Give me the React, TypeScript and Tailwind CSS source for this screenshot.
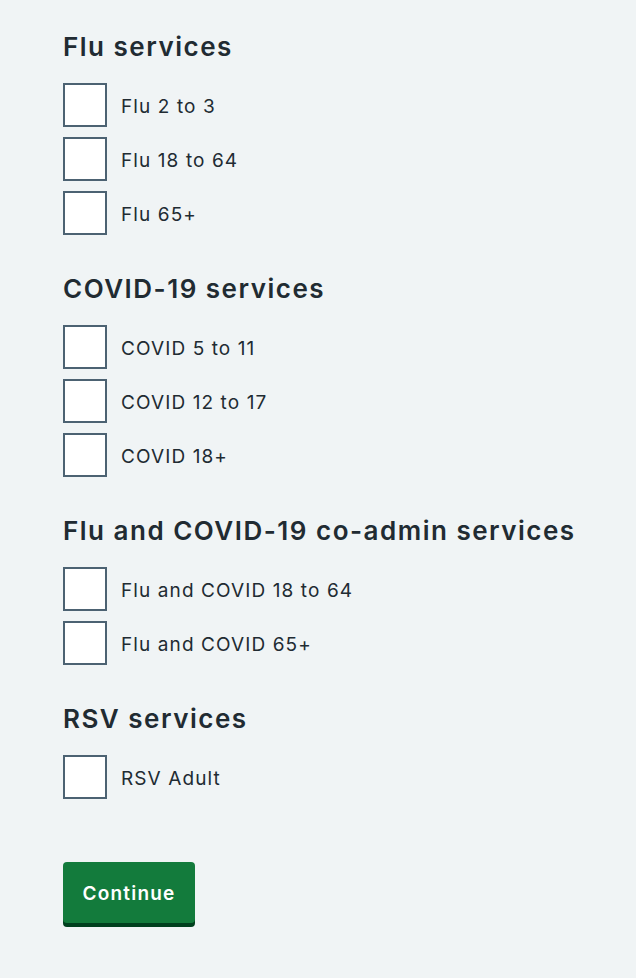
import React from "react";

const sections = [
  { title: "Flu services", items: ["Flu 2 to 3", "Flu 18 to 64", "Flu 65+"] },
  { title: "COVID-19 services", items: ["COVID 5 to 11", "COVID 12 to 17", "COVID 18+"] },
  {
    title: "Flu and COVID-19 co-admin services",
    items: ["Flu and COVID 18 to 64", "Flu and COVID 65+"],
  },
  { title: "RSV services", items: ["RSV Adult"] },
];

export default function App() {
  return (
    <div
      className="min-h-[978px] bg-[#f0f4f5] pl-[63px] pr-[32px] pt-[31px] text-[#212b32]"
      style={{ fontFamily: "Inter, 'Noto Sans', sans-serif" }}
    >
      <form className="flex flex-col gap-[38px]">
        {sections.map((section) => (
          <fieldset key={section.title} className="flex flex-col">
            <legend className="mb-[20px] whitespace-nowrap text-[26px] font-semibold leading-[32px] tracking-[1.5px]">
              {section.title}
            </legend>
            <div className="flex flex-col gap-[10px]">
              {section.items.map((item) => (
                <label key={item} className="flex items-center gap-[14px] cursor-pointer">
                  <input
                    type="checkbox"
                    className="h-[44px] w-[44px] shrink-0 appearance-none border-2 border-[#4c6272] bg-white"
                  />
                  <span className="pt-[4px] text-[19px] leading-[28px] tracking-[1.1px]">{item}</span>
                </label>
              ))}
            </div>
          </fieldset>
        ))}
      </form>
      <button
        type="button"
        className="mt-[63px] h-[61px] w-[132px] rounded-[4px] bg-[#137b3c] pt-[3px] text-[19px] font-semibold tracking-[1.2px] text-white shadow-[0_4px_0_#00401e]"
      >
        Continue
      </button>
    </div>
  );
}
